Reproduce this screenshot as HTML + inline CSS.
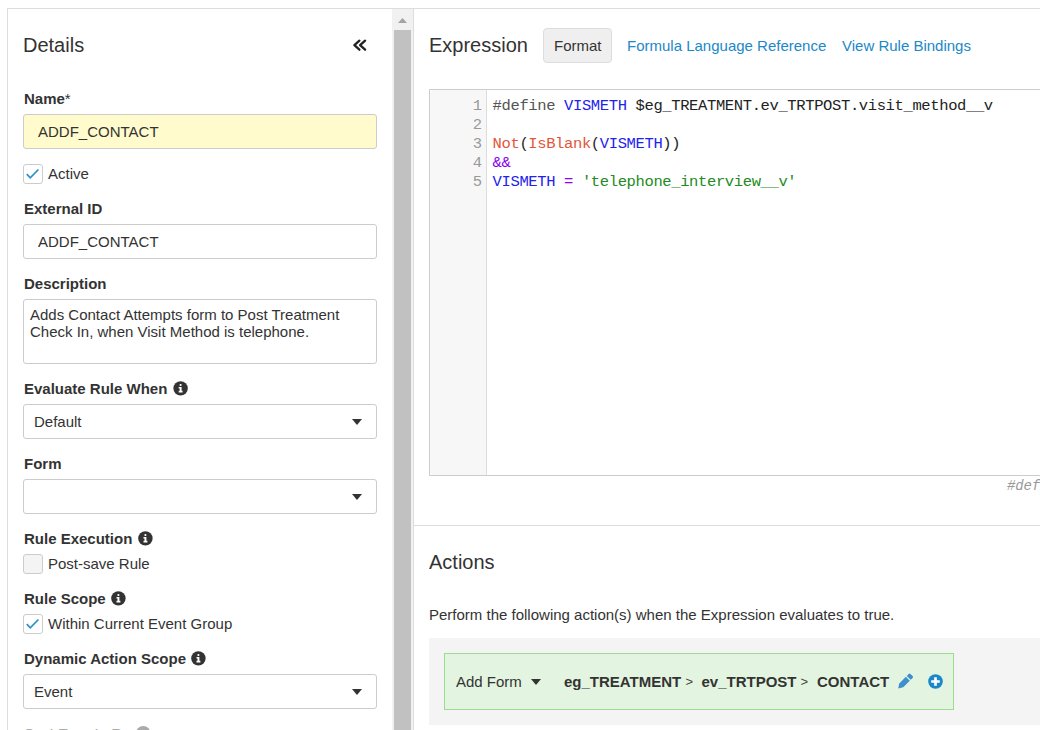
<!DOCTYPE html>
<html><head><meta charset="utf-8">
<style>
html,body{margin:0;padding:0;background:#fff;width:1040px;height:730px;overflow:hidden;position:relative;}
body{font-family:"Liberation Sans",sans-serif;color:#333;font-size:15px;}
.a{position:absolute;white-space:nowrap;}
.t{position:absolute;white-space:nowrap;line-height:17px;font-size:15px;}
.h{position:absolute;white-space:nowrap;line-height:24px;font-size:20px;color:#333;}
.lb{position:absolute;white-space:nowrap;line-height:17px;font-size:15px;font-weight:bold;color:#333;}
.inp{position:absolute;left:23px;width:352px;height:33px;border:1px solid #ccc;border-radius:3px;background:#fff;}
.cb{position:absolute;left:23px;width:18px;height:18px;border:1px solid #ccc;border-radius:3px;background:#fff;}
.info{position:absolute;width:20px;height:20px;}
.caret{position:absolute;width:0;height:0;border-left:5px solid transparent;border-right:5px solid transparent;border-top:6px solid #333;}
.code{position:absolute;white-space:pre;font-family:"Liberation Mono",monospace;font-size:15.5px;letter-spacing:-0.37px;line-height:19px;color:#222;}
.ln{position:absolute;white-space:pre;font-family:"Liberation Mono",monospace;font-size:15.5px;line-height:19px;color:#999;text-align:right;width:40px;}
.link{color:#1b88c8;}
</style></head>
<body>
<!-- LEFT PANEL -->
<div class="a" style="left:7px;top:8px;width:405px;height:740px;border:1px solid #ddd;"></div>
<!-- scrollbar -->
<div class="a" style="left:392px;top:9px;width:21px;height:721px;background:#f1f1f1;"></div>
<div class="a" style="left:394px;top:30px;width:17px;height:700px;background:#c1c1c1;"></div>
<svg class="a" style="left:392px;top:9px" width="21" height="21"><path d="M6 14 L10.5 9 L15 14 Z" fill="#a3a3a3"/></svg>

<div class="h" style="left:23px;top:33px;">Details</div>
<svg class="a" style="left:345px;top:30px" width="30" height="30"><path d="M14.4 10.7 L9.4 15.2 L14.4 19.7 M20.1 10.7 L15.1 15.2 L20.1 19.7" stroke="#222" stroke-width="2.3" fill="none" stroke-linecap="round" stroke-linejoin="round"/></svg>

<div class="lb" style="left:24px;top:90px;">Name<span style="font-weight:normal">*</span></div>
<div class="inp" style="top:114px;background:#fffbcc;"></div>
<div class="t" style="left:38px;top:123px;">ADDF_CONTACT</div>

<div class="cb" style="top:164px;"></div>
<svg class="a" style="left:23px;top:164px" width="20" height="20"><path d="M3.8 10.2 L7.3 13.8 L15.4 5.5" stroke="#2a8fcb" stroke-width="1.7" fill="none"/></svg>
<div class="t" style="left:48px;top:165px;">Active</div>

<div class="lb" style="left:24px;top:200px;">External ID</div>
<div class="inp" style="top:224px;"></div>
<div class="t" style="left:38px;top:233px;">ADDF_CONTACT</div>

<div class="lb" style="left:24px;top:275px;">Description</div>
<div class="a" style="left:23px;top:299px;width:352px;height:63px;border:1px solid #ccc;border-radius:3px;"></div>
<div class="t" style="left:30px;top:306px;">Adds Contact Attempts form to Post Treatment<br>Check In, when Visit Method is telephone.</div>

<div class="lb" style="left:24px;top:380px;">Evaluate Rule When</div>
<svg class="info" style="left:170px;top:378px" viewBox="0 0 20 20"><g transform="translate(0.60 0.40)"><circle cx="10" cy="10" r="7.2" fill="#333"/><path d="M10 5.5a1.1 1.1 0 1 1 0 2.2a1.1 1.1 0 1 1 0-2.2z M8.1 8.6h2.9v3.8h1v1.6h-3.9v-1.6h1v-2.2h-1z" fill="#fff"/></g></svg>
<div class="inp" style="top:404px;"></div>
<div class="t" style="left:34px;top:413px;">Default</div>
<div class="caret" style="left:352px;top:419px;"></div>

<div class="lb" style="left:24px;top:455px;">Form</div>
<div class="inp" style="top:479px;"></div>
<div class="caret" style="left:352px;top:494px;"></div>

<div class="lb" style="left:24px;top:530px;">Rule Execution</div>
<svg class="info" style="left:135px;top:528px" viewBox="0 0 20 20"><g transform="translate(0.40 0.40)"><circle cx="10" cy="10" r="7.2" fill="#333"/><path d="M10 5.5a1.1 1.1 0 1 1 0 2.2a1.1 1.1 0 1 1 0-2.2z M8.1 8.6h2.9v3.8h1v1.6h-3.9v-1.6h1v-2.2h-1z" fill="#fff"/></g></svg>
<div class="cb" style="top:554px;background:#f4f4f4;"></div>
<div class="t" style="left:48px;top:555px;">Post-save Rule</div>

<div class="lb" style="left:24px;top:590px;">Rule Scope</div>
<svg class="info" style="left:108px;top:588px" viewBox="0 0 20 20"><g transform="translate(0.40 0.40)"><circle cx="10" cy="10" r="7.2" fill="#333"/><path d="M10 5.5a1.1 1.1 0 1 1 0 2.2a1.1 1.1 0 1 1 0-2.2z M8.1 8.6h2.9v3.8h1v1.6h-3.9v-1.6h1v-2.2h-1z" fill="#fff"/></g></svg>
<div class="cb" style="top:614px;"></div>
<svg class="a" style="left:23px;top:614px" width="20" height="20"><path d="M3.8 10.2 L7.3 13.8 L15.4 5.5" stroke="#2a8fcb" stroke-width="1.7" fill="none"/></svg>
<div class="t" style="left:48px;top:615px;">Within Current Event Group</div>

<div class="lb" style="left:24px;top:650px;">Dynamic Action Scope</div>
<svg class="info" style="left:188px;top:648px" viewBox="0 0 20 20"><g transform="translate(0.40 0.40)"><circle cx="10" cy="10" r="7.2" fill="#333"/><path d="M10 5.5a1.1 1.1 0 1 1 0 2.2a1.1 1.1 0 1 1 0-2.2z M8.1 8.6h2.9v3.8h1v1.6h-3.9v-1.6h1v-2.2h-1z" fill="#fff"/></g></svg>
<div class="inp" style="top:674px;"></div>
<div class="t" style="left:34px;top:683px;">Event</div>
<div class="caret" style="left:352px;top:689px;"></div>

<div class="lb" style="left:24px;top:725px;color:#aaa;">Sort Events By</div>
<svg class="info" style="left:133px;top:723px" viewBox="0 0 20 20"><g transform="translate(0.20 0.20)"><circle cx="10" cy="10" r="7.2" fill="#aaa"/></g></svg>

<!-- RIGHT PANEL -->
<div class="a" style="left:414px;top:8px;width:626px;height:1px;background:#ddd;"></div>
<div class="h" style="left:429px;top:33px;">Expression</div>
<div class="a" style="left:543px;top:28px;width:67px;height:33px;border:1px solid #ddd;border-radius:4px;background:#efefef;"></div>
<div class="t" style="left:554px;top:37px;">Format</div>
<div class="t link" style="left:627px;top:37px;">Formula Language Reference</div>
<div class="t link" style="left:842px;top:37px;">View Rule Bindings</div>

<!-- editor -->
<div class="a" style="left:429px;top:89px;width:700px;height:385px;border:1px solid #ccc;"></div>
<div class="a" style="left:430px;top:90px;width:56px;height:385px;background:#f7f7f7;border-right:1px solid #ddd;border-radius:4px 0 0 4px;"></div>
<div class="ln" style="left:442px;top:96.5px;">1
2
3
4
5</div>
<div class="code" style="left:492.6px;top:96.5px;"><span style="color:#555">#define</span> <span style="color:#22e">VISMETH</span> $eg_TREATMENT.ev_TRTPOST.visit_method__v

<span style="color:#e4553a">Not</span>(<span style="color:#e4553a">IsBlank</span>(<span style="color:#22e">VISMETH</span>))
<span style="color:#80e">&amp;&amp;</span>
<span style="color:#22e">VISMETH</span> <span style="color:#80e">=</span> <span style="color:#228b22">'telephone_interview__v'</span></div>
<div class="code" style="left:1007px;top:476.5px;color:#999;font-style:italic;font-size:14px;letter-spacing:-0.1px;">#def</div>

<div class="a" style="left:414px;top:525px;width:626px;height:1px;background:#ddd;"></div>
<div class="h" style="left:429px;top:550px;">Actions</div>
<div class="t" style="left:429px;top:606px;">Perform the following action(s) when the Expression evaluates to true.</div>

<div class="a" style="left:429px;top:638px;width:611px;height:87px;background:#f4f4f4;"></div>
<div class="a" style="left:444px;top:653px;width:508px;height:55px;border:1px solid #9ddb8f;background:#e3f5e0;"></div>
<div class="t" style="left:456px;top:673px;">Add Form</div>
<div class="caret" style="left:531px;top:679px;"></div>
<div class="lb" style="left:564px;top:673px;">eg_TREATMENT</div>
<div class="t" style="left:685.5px;top:673px;font-size:13px;color:#444;">&gt;</div>
<div class="lb" style="left:701.5px;top:673px;">ev_TRTPOST</div>
<div class="t" style="left:800.5px;top:673px;font-size:13px;color:#444;">&gt;</div>
<div class="lb" style="left:817px;top:673px;">CONTACT</div>
<svg class="a" style="left:890px;top:666px" width="30" height="30" viewBox="0 0 30 30"><g transform="translate(8.2 22.4) rotate(-45)"><path d="M0 0 L4.3 -2.8 L13.6 -2.8 L13.6 2.8 L4.3 2.8 Z" fill="#3d8fcf"/><path d="M14.9 -2.8 L17.6 -2.8 Q18.9 -2.8 18.9 -1.5 L18.9 1.5 Q18.9 2.8 17.6 2.8 L14.9 2.8 Z" fill="#3d8fcf"/></g></svg>
<svg class="a" style="left:926px;top:672px" width="20" height="20" viewBox="0 0 20 20"><circle cx="9.5" cy="9.5" r="7.3" fill="#1a87c9"/><path d="M8.15 5.2h2.7v2.95h2.95v2.7h-2.95v2.95h-2.7v-2.95h-2.95v-2.7h2.95z" fill="#fff"/></svg>
</body></html>
